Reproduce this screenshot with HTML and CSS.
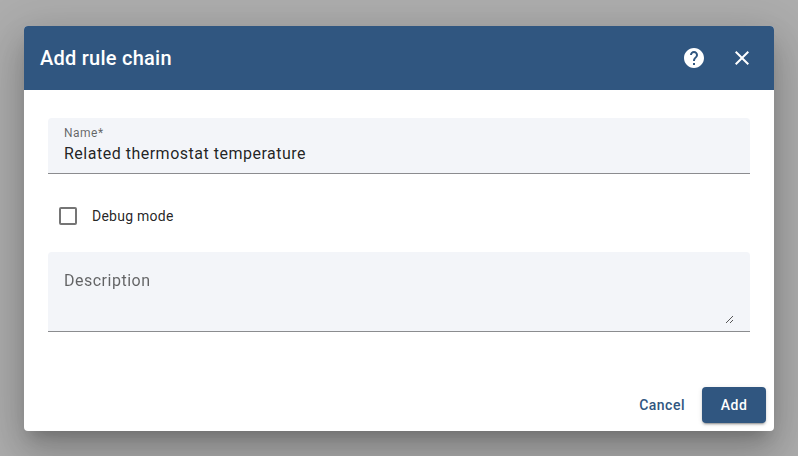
FILE: index.html
```html
<!DOCTYPE html>
<html lang="en">
<head>
<meta charset="utf-8">
<title>Add rule chain</title>
<link rel="stylesheet" href="styles.css">
</head>
<body>
<form class="dialog">
  <header class="toolbar">
    <h2 class="title">Add rule chain</h2>
    <button class="icon-button" type="button" aria-label="Help">
      <svg class="icon" viewBox="0 0 24 24"><path d="M12 2C6.48 2 2 6.48 2 12s4.48 10 10 10 10-4.48 10-10S17.52 2 12 2zm1 17h-2v-2h2v2zm2.07-7.75l-.9.92C13.45 12.9 13 13.5 13 15h-2v-.5c0-1.1.45-2.1 1.17-2.83l1.24-1.26c.37-.36.59-.86.59-1.41 0-1.1-.9-2-2-2s-2 .9-2 2H8c0-2.21 1.79-4 4-4s4 1.79 4 4c0 .88-.36 1.68-.93 2.25z"/></svg>
    </button>
    <button class="icon-button" type="button" aria-label="Close">
      <svg class="icon" viewBox="0 0 24 24"><path d="M19 6.41L17.59 5 12 10.59 6.41 5 5 6.41 10.59 12 5 17.59 6.41 19 12 13.41 17.59 19 19 17.59 13.41 12z"/></svg>
    </button>
  </header>
  <main class="content">
    <div class="field field-name">
      <span class="label">Name*</span>
      <span class="value">Related thermostat temperature</span>
    </div>
    <div class="check-row">
      <span class="checkbox"></span>
      <span class="check-label">Debug mode</span>
    </div>
    <div class="field field-description">
      <span class="placeholder">Description</span>
      <svg class="resizer" viewBox="0 0 8 8"><path d="M0 7l7-7M4 7l3-3"/></svg>
    </div>
  </main>
  <footer class="actions">
    <button class="button" type="button">Cancel</button>
    <button class="button button-primary" type="button">Add</button>
  </footer>
</form>
</body>
</html>
```
FILE: styles.css
```css
* {
  box-sizing: border-box;
}

body {
  margin: 0;
  height: 456px;
  padding: 26px 24px 25px;
  overflow: hidden;
  background: #adadad;
  font-family: Roboto, "Liberation Sans", sans-serif;
  color: rgba(0, 0, 0, 0.87);
}

button {
  border: 0;
  padding: 0;
  background: none;
  font-family: inherit;
}

.dialog {
  display: flex;
  flex-direction: column;
  height: 405px;
  border-radius: 4px;
  background: #fff;
  box-shadow: 0 11px 15px -7px rgba(0, 0, 0, 0.2),
    0 24px 38px 3px rgba(0, 0, 0, 0.14),
    0 9px 46px 8px rgba(0, 0, 0, 0.12);
}

.toolbar {
  display: flex;
  align-items: center;
  height: 64px;
  padding: 0 8px 0 16px;
  border-radius: 4px 4px 0 0;
  background: #305680;
  color: #fff;
}

.title {
  flex: 1;
  margin: 0;
  font-size: 20px;
  font-weight: 500;
  line-height: 32px;
  letter-spacing: 0.25px;
}

.icon-button {
  display: flex;
  align-items: center;
  justify-content: center;
  width: 48px;
  height: 48px;
  color: inherit;
}

.icon {
  width: 24px;
  height: 24px;
  fill: currentColor;
}

.content {
  flex: 1;
  padding: 28px 24px 0;
}

.field {
  display: flex;
  padding: 0 16px;
  border-bottom: 1px solid #8b8c8f;
  border-radius: 4px 4px 0 0;
  background: #f3f5f9;
  letter-spacing: 0.5px;
}

.field-name {
  flex-direction: column;
  height: 56px;
  padding-top: 7px;
}

.label {
  font-size: 12px;
  line-height: 16px;
  color: rgba(0, 0, 0, 0.6);
}

.value {
  padding-top: 1px;
  font-size: 16px;
  line-height: 24px;
}

.check-row {
  display: flex;
  align-items: center;
  gap: 15px;
  height: 40px;
  margin: 22px 0 16px;
  padding-left: 11px;
}

.checkbox {
  width: 18px;
  height: 18px;
  border: 2px solid #757575;
  border-radius: 2px;
}

.check-label {
  font-size: 14px;
  line-height: 20px;
  letter-spacing: 0.25px;
}

.field-description {
  align-items: flex-end;
  justify-content: space-between;
  height: 80px;
  padding-bottom: 7px;
}

.placeholder {
  align-self: flex-start;
  padding-top: 17px;
  font-size: 16px;
  line-height: 24px;
  color: rgba(0, 0, 0, 0.6);
  transform: translateY(-0.5px);
  will-change: transform;
}

.resizer {
  width: 8px;
  height: 8px;
  fill: none;
  stroke: #444;
  stroke-width: 0.9;
}

.actions {
  display: flex;
  justify-content: flex-end;
  gap: 8px;
  padding: 8px;
}

.button {
  height: 36px;
  padding: 0 9px;
  border-radius: 4px;
  font-size: 14px;
  font-weight: 500;
  letter-spacing: 0.5px;
  color: #305680;
}

.button-primary {
  width: 64px;
  background: #305680;
  color: #fff;
  box-shadow: 0 3px 1px -2px rgba(0, 0, 0, 0.2),
    0 2px 2px 0 rgba(0, 0, 0, 0.14),
    0 1px 5px 0 rgba(0, 0, 0, 0.12);
}
```
